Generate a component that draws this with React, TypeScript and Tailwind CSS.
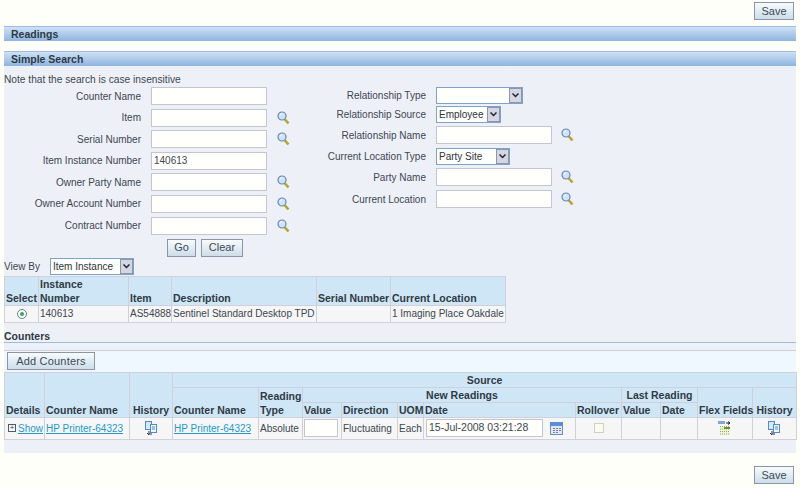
import React from "react";

const thCell =
  "border border-[#cfd0dc] bg-[#cfe6f6] px-[1px] align-bottom text-[10.5px] font-bold text-[#2f3a44] leading-[14px]";
const thLeft = `${thCell} text-left`;
const thCenter = `${thCell} text-center`;
const tdBase =
  "border border-[#cfd0dc] bg-[#f6f6f6] px-[1px] align-middle text-[#3d4750]";

const Search = () => (
  <svg width="13" height="14" viewBox="0 0 13 14" className="shrink-0">
    <path d="M7.5 8 L11.5 12.5" stroke="#b5a52c" strokeWidth="2.6" />
    <circle cx="5" cy="5" r="4" fill="#cfe3f7" stroke="#6c86b4" strokeWidth="1.2" />
    <path d="M3 4.5 A2.2 2.2 0 0 1 5 2.8" stroke="#fff" strokeWidth="1" fill="none" />
  </svg>
);

const Calendar = () => (
  <svg width="13" height="13" viewBox="0 0 13 13">
    <rect x="0.5" y="0.5" width="12" height="12" fill="#dfe7f2" stroke="#6b8fc0" />
    <rect x="0" y="0" width="13" height="4" fill="#5b8fdc" />
    <path d="M3 6.5h2M6 6.5h2M9 6.5h2M3 8.5h2M6 8.5h2M9 8.5h2M3 10.5h2M6 10.5h2" stroke="#7b8494" />
  </svg>
);

const History = () => (
  <svg width="13" height="14" viewBox="0 0 13 14">
    <rect x="0.5" y="0.5" width="6" height="8" fill="#d8e8f8" stroke="#4d8ccf" />
    <rect x="5.5" y="3.5" width="6" height="8" fill="#eef6fd" stroke="#4d8ccf" />
    <path d="M7 6h3M7 8h3" stroke="#4d8ccf" />
    <path d="M4 10v3h3M2 12l2 2" stroke="#333" fill="none" />
  </svg>
);

const FlexFields = () => (
  <svg width="14" height="14" viewBox="0 0 14 14">
    <rect x="0" y="0" width="7" height="3" fill="#7ba8d8" />
    <path d="M8 2h4M10 0.5l2 1.5-2 1.5" stroke="#222" fill="none" />
    <path d="M2 5h10v9H2z" fill="#eef3dc" />
    <path d="M2 5.5h9M2 8h10M2 10.5h10M2 13h10" stroke="#8fae5c" strokeDasharray="1 1" />
    <path d="M6 6h6v2H6z" fill="#6f8f3e" />
  </svg>
);

const Arrow = () => (
  <span className="flex h-full w-[13px] items-center justify-center border border-[#8f94a8] bg-[#d5d6e4]">
    <svg width="7" height="5" viewBox="0 0 7 5">
      <path d="M0.5 0.5 L3.5 3.5 L6.5 0.5" stroke="#1d2530" strokeWidth="1.5" fill="none" />
    </svg>
  </span>
);

const Select = ({ width, value }: { width: string; value?: string }) => (
  <span
    className={`flex h-[17px] items-center justify-between whitespace-nowrap border border-[#7da3c9] bg-[#fffffb] pl-[2px] text-[#2c343c] ${width}`}
  >
    <span>{value}</span>
    <Arrow />
  </span>
);

const Field = ({ value, width = "w-[116px]" }: { value?: string; width?: string }) => (
  <span
    className={`flex h-[18px] items-center whitespace-nowrap border border-[#c3c6d2] bg-[#fffffb] pl-[2px] text-[#3d4750] ${width}`}
  >
    {value}
  </span>
);

const Button = ({ label, className }: { label: string; className: string }) => (
  <span
    className={`flex h-[18px] items-center justify-center border border-[#8a95a8] bg-gradient-to-b from-[#f8fbfd] to-[#cddde9] text-[11px] text-[#3b4a57] ${className}`}
  >
    {label}
  </span>
);

const Header = ({ title }: { title: string }) => (
  <div className="flex h-[15px] items-center border-t border-[#9dbde3] bg-gradient-to-b from-[#cfe1f4] to-[#8fb4e0] pl-[7px] pt-[1px] text-[10.5px] font-bold text-[#2c3a48]">
    {title}
  </div>
);

const leftRows = [
  { label: "Counter Name", lov: false },
  { label: "Item", lov: true },
  { label: "Serial Number", lov: true },
  { label: "Item Instance Number", lov: false, value: "140613" },
  { label: "Owner Party Name", lov: true },
  { label: "Owner Account Number", lov: true },
  { label: "Contract Number", lov: true },
];

const link = "text-[#1f9ac9] underline";
const rightLabel = "w-[102px] whitespace-nowrap text-right";

export default function App() {
  return (
    <div
      className="flex h-[488px] w-[800px] flex-col overflow-hidden bg-[#fffffa] text-[10px] text-[#3d4750]"
      style={{ fontFamily: '"Liberation Sans", sans-serif' }}
    >
      <div className="flex h-[26px] items-start justify-end pr-[6px] pt-[2px]">
        <Button label="Save" className="w-[40px]" />
      </div>
      <div className="px-[4px]">
        <Header title="Readings" />
      </div>
      <div className="h-[10px]" />
      <div className="px-[4px]">
        <Header title="Simple Search" />
        <div className="h-[387px] bg-[#eef0f8]">
          <div className="h-[21px] pt-[7px] text-[10.2px] leading-[14px]">Note that the search is case insensitive</div>

          <div className="flex">
            <div className="flex w-[320px] flex-col gap-[3.6px]">
              {leftRows.map((row) => (
                <div key={row.label} className="flex h-[18px] items-center">
                  <span className="w-[137px] text-right">{row.label}</span>
                  <span className="ml-[10px]">
                    <Field value={row.value} />
                  </span>
                  {row.lov && (
                    <span className="ml-[10px]">
                      <Search />
                    </span>
                  )}
                </div>
              ))}
            </div>
            <div className="flex flex-col">
              <div className="flex h-[17px] items-center">
                <span className={rightLabel}>Relationship Type</span>
                <span className="ml-[10px]"><Select width="w-[87px]" /></span>
              </div>
              <div className="mt-[2px] flex h-[17px] items-center">
                <span className={rightLabel}>Relationship Source</span>
                <span className="ml-[10px]"><Select width="w-[65px]" value="Employee" /></span>
              </div>
              <div className="mt-[3px] flex h-[18px] items-center">
                <span className={rightLabel}>Relationship Name</span>
                <span className="ml-[10px]"><Field /></span>
                <span className="ml-[9px]"><Search /></span>
              </div>
              <div className="mt-[4px] flex h-[17px] items-center">
                <span className={rightLabel}>Current Location Type</span>
                <span className="ml-[10px]"><Select width="w-[74px]" value="Party Site" /></span>
              </div>
              <div className="mt-[3px] flex h-[18px] items-center">
                <span className={rightLabel}>Party Name</span>
                <span className="ml-[10px]"><Field /></span>
                <span className="ml-[9px]"><Search /></span>
              </div>
              <div className="mt-[4px] flex h-[18px] items-center">
                <span className={rightLabel}>Current Location</span>
                <span className="ml-[10px]"><Field /></span>
                <span className="ml-[9px]"><Search /></span>
              </div>
            </div>
          </div>

          <div className="flex gap-[5px] pl-[163px] pt-[4px]">
            <Button label="Go" className="w-[29px]" />
            <Button label="Clear" className="w-[42px]" />
          </div>

          <div className="flex h-[19px] items-center">
            <span className="w-[46px]">View By</span>
            <Select width="w-[84px]" value="Item Instance" />
          </div>

          <table className="w-[501px] table-fixed border-collapse">
            <colgroup>
              <col className="w-[34px]" />
              <col className="w-[90px]" />
              <col className="w-[43px]" />
              <col className="w-[145px]" />
              <col className="w-[74px]" />
              <col className="w-[115px]" />
            </colgroup>
            <thead>
              <tr className="h-[28px]">
                <th className={thLeft}>Select</th>
                <th className={thLeft}>Instance<br />Number</th>
                <th className={thLeft}>Item</th>
                <th className={thLeft}>Description</th>
                <th className={`${thLeft} whitespace-nowrap`}>Serial Number</th>
                <th className={`${thLeft} whitespace-nowrap`}>Current Location</th>
              </tr>
            </thead>
            <tbody>
              <tr className="h-[17px] leading-[14px]">
                <td className={`${tdBase} text-center`}>
                  <span className="mx-auto flex h-[10px] w-[10px] items-center justify-center rounded-full border border-[#5f7f9f] bg-white">
                    <span className="h-[4px] w-[4px] rounded-full bg-[#3ba54a]" />
                  </span>
                </td>
                <td className={tdBase}>140613</td>
                <td className={`${tdBase} whitespace-nowrap`}>AS54888</td>
                <td className={`${tdBase} whitespace-nowrap`}>Sentinel Standard Desktop TPD</td>
                <td className={tdBase} />
                <td className={`${tdBase} whitespace-nowrap`}>1 Imaging Place Oakdale</td>
              </tr>
            </tbody>
          </table>

          <div className="mt-[8px] h-[12px] border-b border-[#9dbde3] text-[10.5px] font-bold leading-[10px] text-[#2f3a44]">
            Counters
          </div>
          <div className="mt-[7px] flex h-[22px] items-center border-t border-[#cfd0dc] bg-[#eff7ff] pl-[3px]">
            <Button label="Add Counters" className="w-[88px] tracking-[0.2px]" />
          </div>

          <table className="w-[792px] table-fixed border-collapse">
            <colgroup>
              <col className="w-[40px]" />
              <col className="w-[85px]" />
              <col className="w-[43px]" />
              <col className="w-[86px]" />
              <col className="w-[44px]" />
              <col className="w-[39px]" />
              <col className="w-[56px]" />
              <col className="w-[26px]" />
              <col className="w-[152px]" />
              <col className="w-[46px]" />
              <col className="w-[39px]" />
              <col className="w-[37px]" />
              <col className="w-[55px]" />
              <col className="w-[44px]" />
            </colgroup>
            <thead>
              <tr className="h-[15px]">
                <th rowSpan={3} className={thLeft}>Details</th>
                <th rowSpan={3} className={`${thLeft} whitespace-nowrap`}>Counter Name</th>
                <th rowSpan={3} className={thCenter}>History</th>
                <th colSpan={11} className={thCenter}>Source</th>
              </tr>
              <tr className="h-[15px]">
                <th rowSpan={2} className={`${thLeft} whitespace-nowrap`}>Counter Name</th>
                <th rowSpan={2} className={thLeft}>Reading Type</th>
                <th colSpan={5} className={thCenter}>New Readings</th>
                <th colSpan={2} className={`${thCenter} whitespace-nowrap`}>Last Reading</th>
                <th rowSpan={2} className={`${thCenter} whitespace-nowrap`}>Flex Fields</th>
                <th rowSpan={2} className={thCenter}>History</th>
              </tr>
              <tr className="h-[15px]">
                <th className={thLeft}>Value</th>
                <th className={thLeft}>Direction</th>
                <th className={thLeft}>UOM</th>
                <th className={thLeft}>Date</th>
                <th className={thLeft}>Rollover</th>
                <th className={thLeft}>Value</th>
                <th className={thLeft}>Date</th>
              </tr>
            </thead>
            <tbody>
              <tr className="h-[22px]">
                <td className={`${tdBase} whitespace-nowrap`}>
                  <span className="flex items-center gap-[2px] pl-[2px]">
                    <span className="flex h-[8px] w-[8px] shrink-0 items-center justify-center border border-[#4d5a68] text-[8px] leading-[6px]">+</span>
                    <span className={link}>Show</span>
                  </span>
                </td>
                <td className={`${tdBase} whitespace-nowrap`}><span className={link}>HP Printer-64323</span></td>
                <td className={tdBase}><span className="flex justify-center"><History /></span></td>
                <td className={`${tdBase} whitespace-nowrap`}><span className={link}>HP Printer-64323</span></td>
                <td className={tdBase}>Absolute</td>
                <td className={tdBase}><Field width="w-[34px]" /></td>
                <td className={tdBase}>Fluctuating</td>
                <td className={tdBase}>Each</td>
                <td className={tdBase}>
                  <span className="flex items-center gap-[7px] pl-[1px]">
                    <Field value="15-Jul-2008 03:21:28" width="w-[117px] text-[10.5px]" />
                    <Calendar />
                  </span>
                </td>
                <td className={tdBase}>
                  <span className="mx-auto block h-[10px] w-[10px] border border-[#d0d0c0] bg-[#fbfbf0]" />
                </td>
                <td className={tdBase} />
                <td className={tdBase} />
                <td className={tdBase}><span className="flex justify-center"><FlexFields /></span></td>
                <td className={tdBase}><span className="flex justify-center"><History /></span></td>
              </tr>
            </tbody>
          </table>
        </div>
      </div>
      <div className="flex justify-end pr-[6px] pt-[13px]">
        <Button label="Save" className="w-[40px]" />
      </div>
    </div>
  );
}
